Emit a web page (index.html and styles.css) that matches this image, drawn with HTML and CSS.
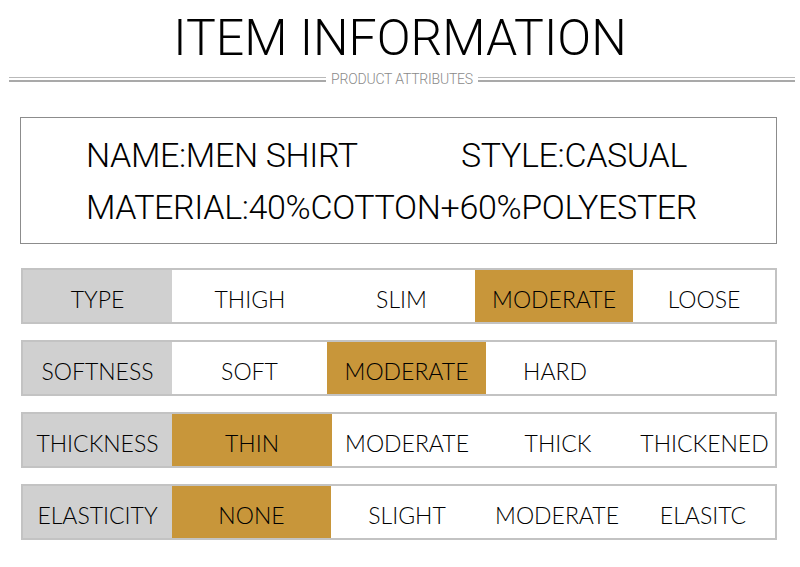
FILE: index.html
```html
<!DOCTYPE html>
<html lang="en">
<head>
<meta charset="utf-8">
<title>Item Information</title>
<link rel="stylesheet" href="styles.css">
</head>
<body>
<div class="page">
  <h1 class="title">ITEM INFORMATION</h1>
  <div class="divider">
    <span class="rule"></span>
    <span class="divider-text">PRODUCT ATTRIBUTES</span>
    <span class="rule"></span>
  </div>

  <div class="info">
    <div class="info-line">
      <span class="info-name">NAME:MEN SHIRT</span>
      <span>STYLE:CASUAL</span>
    </div>
    <div class="info-line">MATERIAL:40%COTTON+60%POLYESTER</div>
  </div>

  <div class="table">
    <div class="row row-type">
      <div class="cell label">TYPE</div>
      <div class="cell">THIGH</div>
      <div class="cell">SLIM</div>
      <div class="cell active">MODERATE</div>
      <div class="cell">LOOSE</div>
    </div>
    <div class="row row-soft">
      <div class="cell label">SOFTNESS</div>
      <div class="cell">SOFT</div>
      <div class="cell active">MODERATE</div>
      <div class="cell">HARD</div>
      <div class="cell"></div>
    </div>
    <div class="row row-thick">
      <div class="cell label">THICKNESS</div>
      <div class="cell active">THIN</div>
      <div class="cell">MODERATE</div>
      <div class="cell">THICK</div>
      <div class="cell">THICKENED</div>
    </div>
    <div class="row row-elastic">
      <div class="cell label">ELASTICITY</div>
      <div class="cell active">NONE</div>
      <div class="cell">SLIGHT</div>
      <div class="cell">MODERATE</div>
      <div class="cell">ELASITC</div>
    </div>
  </div>
</div>
</body>
</html>
```

FILE: styles.css
```css
html, body {
  margin: 0;
  padding: 0;
  background: #ffffff;
}

.page {
  width: 800px;
  height: 567px;
  overflow: hidden;
  font-family: Roboto, "Liberation Sans", sans-serif;
  color: #111;
}

.title {
  margin: 0;
  padding-top: 13px;
  font-size: 50px;
  line-height: 50px;
  font-weight: 300;
  text-align: center;
  color: #000;
  letter-spacing: 0;
}

.divider {
  display: flex;
  align-items: center;
  margin: 6px 5px 0 9px;
  height: 20px;
  gap: 5px;
}

.rule {
  flex: 1;
  height: 2px;
  border-top: 1px solid #b9b9b9;
  border-bottom: 2px solid #a9a9a9;
}

.divider-text {
  font-size: 14px;
  font-weight: 300;
  color: #8a8a8a;
  line-height: 14px;
  letter-spacing: -0.2px;
}

.info {
  margin: 28px 23px 0 20px;
  border: 1px solid #8c8c8c;
  padding: 11px 0 8px 65px;
  height: 106px;
}

.info-line {
  display: flex;
  font-size: 34px;
  line-height: 52px;
  font-weight: 300;
  color: #000;
  letter-spacing: -0.35px;
}

.info-name {
  width: 375px;
}

.table {
  display: flex;
  flex-direction: column;
  gap: 16px;
  margin: 24px 23px 0 21px;
}

.row {
  display: grid;
  height: 56px;
  box-sizing: border-box;
  border: 2px solid #c3c3c3;
  font-family: Lato, "Liberation Sans", sans-serif;
  font-weight: 300;
  font-size: 23px;
  color: #000;
}

.row-type { grid-template-columns: 149px 156px 147px 158px 1fr; }
.row-soft { grid-template-columns: 149px 155px 159px 138px 1fr; }
.row-thick { grid-template-columns: 149px 160px 150px 152px 1fr; }
.row-elastic { grid-template-columns: 149px 159px 152px 148px 1fr; }

.cell {
  display: flex;
  align-items: center;
  justify-content: center;
  padding-top: 6px;
  white-space: nowrap;
}

.label {
  background: #d0d0d0;
}

.active {
  background: #c8963a;
}
```
